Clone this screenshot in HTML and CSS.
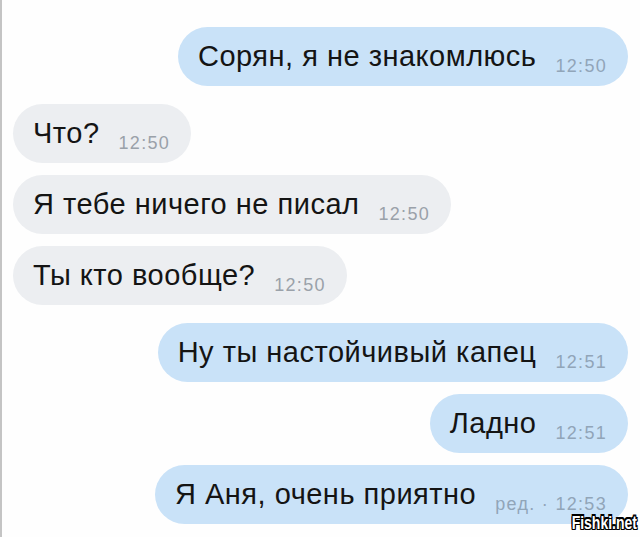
FILE: index.html
```html
<!doctype html>
<html>
<head>
<meta charset="UTF-8">
<title>Чат</title>
<link rel="stylesheet" href="styles.css">
</head>
<body>
<div class="chat">
    <div class="msg out"><span class="txt">Сорян, я не знакомлюсь</span><span class="time">12:50</span></div>
    <div class="msg in switch"><span class="txt">Что?</span><span class="time">12:50</span></div>
    <div class="msg in"><span class="txt">Я тебе ничего не писал</span><span class="time">12:50</span></div>
    <div class="msg in"><span class="txt">Ты кто вообще?</span><span class="time">12:50</span></div>
    <div class="msg out switch"><span class="txt">Ну ты настойчивый капец</span><span class="time">12:51</span></div>
    <div class="msg out"><span class="txt">Ладно</span><span class="time">12:51</span></div>
    <div class="msg out"><span class="txt">Я Аня, очень приятно</span><span class="time">ред. · 12:53</span></div>
</div>
<div class="mark">Fishki.net</div>
</body>
</html>
```

FILE: styles.css
```css
html,body{margin:0;padding:0;}
body{background:#fefefe;font-family:"Liberation Sans",Arial,sans-serif;color:#141414;height:537px;overflow:hidden;position:relative;}
.chat{display:flex;flex-direction:column;align-items:flex-start;height:537px;box-sizing:border-box;border-left:2px solid #c4c4c4;padding:27px 12px 0 11px;}
.msg{display:flex;align-items:baseline;height:59px;box-sizing:border-box;padding:0 21px 0 20px;border-radius:30px;margin-top:12px;line-height:59px;}
.msg:first-child{margin-top:0;}
.msg.switch{margin-top:18px;}
.msg.in{background:#eceef1;}
.msg.out{background:#c9e2f8;align-self:flex-end;}
.txt{font-size:29px;letter-spacing:0.5px;}
.time{font-size:18px;letter-spacing:1.3px;margin-left:19px;position:relative;top:6px;color:#9aa1a9;}
.out .time{color:#91a5b8;}
.mark{position:absolute;right:3px;bottom:6px;font:bold 14px/14px "Liberation Sans",Arial,sans-serif;color:#fff;transform:scaleY(1.25);transform-origin:bottom right;text-shadow:-1px 0 #000,1px 0 #000,0 -1px #000,0 1px #000,-1px -1px #000,1px 1px #000,-1px 1px #000,1px -1px #000;}
```
